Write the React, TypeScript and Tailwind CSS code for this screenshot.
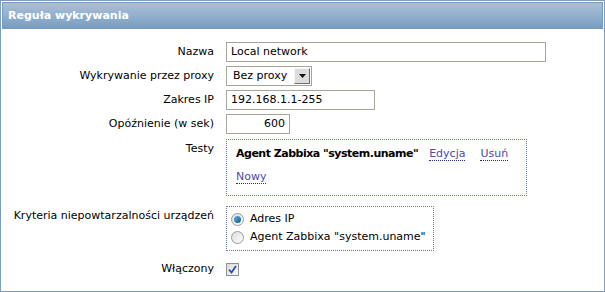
import React from 'react';

const font = { fontFamily: '"DejaVu Sans", Verdana, sans-serif' };

function Row({ label, children, className = '' }: { label: string; children: React.ReactNode; className?: string }) {
  return (
    <div className={`flex ${className}`}>
      <div className="w-[213px] shrink-0 pr-[1px] text-right leading-[20px] text-black">{label}</div>
      <div className="ml-[11px]">{children}</div>
    </div>
  );
}

function Radio({ checked }: { checked?: boolean }) {
  return (
    <span className="flex h-[13px] w-[13px] items-center justify-center rounded-full border border-[#9a9a9a] bg-gradient-to-br from-[#dcdcdc] to-[#ffffff]">
      {checked && <span className="h-[7px] w-[7px] rounded-full bg-gradient-to-br from-[#5ab0e8] to-[#0c5a96]" />}
    </span>
  );
}

function Link({ children }: { children: React.ReactNode }) {
  return <span className="border-b border-dotted border-[#2b2b6e] leading-[13px] text-[#4e4aa0]">{children}</span>;
}

export default function App() {
  return (
    <div className="h-[292px] w-[605px] bg-white text-[11px]" style={font}>
      <div className="flex h-full flex-col border border-[#7d9ec0] p-[1px]">
        {/* Header */}
        <div className="flex h-[27px] items-center border border-[#7a9bbd] bg-gradient-to-b from-[#a9c0d7] via-[#93b0cd] to-[#779cc1] pl-[5px] pt-[1px] text-[11px] font-bold text-white">
          Reguła wykrywania
        </div>

        <div className="flex flex-col pt-[13px]">
          <Row label="Nazwa">
            <div className="flex h-[20px] w-[320px] items-center border border-[#a5a597] px-[4px]">Local network</div>
          </Row>

          <Row label="Wykrywanie przez proxy" className="mt-[4px]">
            <div className="flex h-[20px] w-[86px] items-center justify-between border border-[#a5a597] pl-[6px] pr-[1px]">
              <span>Bez proxy</span>
              <span className="flex h-[16px] w-[16px] items-center justify-center border border-t-[#f4f4f4] border-l-[#f4f4f4] border-r-[#6e6e6e] border-b-[#6e6e6e] bg-[#dcdcdc]">
                <svg width="7" height="4" viewBox="0 0 7 4">
                  <path d="M0 0h7L3.5 4z" fill="#111" />
                </svg>
              </span>
            </div>
          </Row>

          <Row label="Zakres IP" className="mt-[4px]">
            <div className="flex h-[20px] w-[149px] items-center border border-[#a5a597] px-[4px]">192.168.1.1-255</div>
          </Row>

          <Row label="Opóźnienie (w sek)" className="mt-[4px]">
            <div className="flex h-[20px] w-[64px] items-center justify-end border border-[#a5a597] px-[4px]">600</div>
          </Row>

          <Row label="Testy" className="mt-[5px]">
            <div className="flex h-[57px] w-[301px] flex-col border border-dotted border-[#6b78a8] pl-[9px] pt-[6px]">
              <div className="flex items-center leading-[16px]">
                <span className="font-bold tracking-[-0.5px]">Agent Zabbixa "system.uname"</span>
                <span className="ml-[11px]"><Link>Edycja</Link></span>
                <span className="ml-[15px]"><Link>Usuń</Link></span>
              </div>
              <div className="mt-[8px] flex">
                <Link>Nowy</Link>
              </div>
            </div>
          </Row>

          <Row label="Kryteria niepowtarzalności urządzeń" className="mt-[10px]">
            <div className="flex h-[45px] w-[208px] flex-col border border-dotted border-[#6b78a8] pl-[4px] pt-[3px]">
              <div className="flex h-[18px] items-center gap-[6px]">
                <Radio checked />
                <span>Adres IP</span>
              </div>
              <div className="flex h-[18px] items-center gap-[6px]">
                <Radio />
                <span>Agent Zabbixa "system.uname"</span>
              </div>
            </div>
          </Row>

          <Row label="Włączony" className="mt-[8px]">
            <div className="flex h-[20px] items-center">
              <span className="flex h-[13px] w-[13px] items-center justify-center border border-[#8f8f8f] bg-gradient-to-br from-[#dcdcdc] to-[#f8f8f8]">
                <svg width="9" height="9" viewBox="0 0 9 9">
                  <path d="M1 4.5l2.5 3L8 1" fill="none" stroke="#2a4fae" strokeWidth="1.8" />
                </svg>
              </span>
            </div>
          </Row>
        </div>
      </div>
    </div>
  );
}
